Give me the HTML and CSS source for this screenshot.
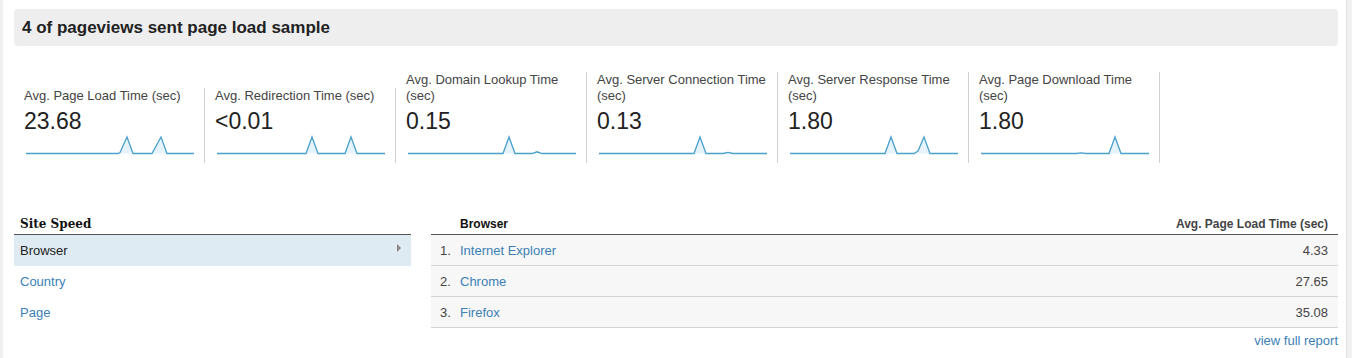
FILE: index.html
```html
<!DOCTYPE html>
<html lang="en">
<head>
  <meta charset="UTF-8" />
  <title>Site Speed Overview</title>
  <meta name="viewport" content="width=device-width, initial-scale=1.0" />
  <link rel="stylesheet" href="styles.css">
</head>

<body>
  <div class="page">

    <!-- Sample banner -->
    <div class="banner">4 of pageviews sent page load sample</div>

    <!-- Metric cards -->
    <div class="metrics">
      <div class="metric">
        <div class="metric-label">Avg. Page Load Time (sec)</div>
        <div class="metric-value">23.68</div>
        <svg class="spark" width="168" height="20" viewBox="0 0 168 20">
          <path class="spark-fill" d="M0 18.5 L92 18.5 L94 17.5 L101 2 L107 18.5 L126 18.5 L135 2 L141 18.5 L168 18.5 Z" />
          <path class="spark-line" d="M0 18.5 L92 18.5 L94 17.5 L101 2 L107 18.5 L126 18.5 L135 2 L141 18.5 L168 18.5" />
        </svg>
      </div>
      <div class="metric">
        <div class="metric-label">Avg. Redirection Time (sec)</div>
        <div class="metric-value">&lt;0.01</div>
        <svg class="spark" width="168" height="20" viewBox="0 0 168 20">
          <path class="spark-fill" d="M0 18.5 L89 18.5 L95 2 L101 18.5 L128 18.5 L134 2 L140 18.5 L168 18.5 Z" />
          <path class="spark-line" d="M0 18.5 L89 18.5 L95 2 L101 18.5 L128 18.5 L134 2 L140 18.5 L168 18.5" />
        </svg>
      </div>
      <div class="metric">
        <div class="metric-label">Avg. Domain Lookup Time (sec)</div>
        <div class="metric-value">0.15</div>
        <svg class="spark" width="168" height="20" viewBox="0 0 168 20">
          <path class="spark-fill" d="M0 18.5 L95 18.5 L101 2 L107 18.5 L124 18.5 L129 16.8 L134 18.5 L168 18.5 Z" />
          <path class="spark-line" d="M0 18.5 L95 18.5 L101 2 L107 18.5 L124 18.5 L129 16.8 L134 18.5 L168 18.5" />
        </svg>
      </div>
      <div class="metric">
        <div class="metric-label">Avg. Server Connection Time (sec)</div>
        <div class="metric-value">0.13</div>
        <svg class="spark" width="168" height="20" viewBox="0 0 168 20">
          <path class="spark-fill" d="M0 18.5 L95 18.5 L101 2 L107 18.5 L124 18.5 L129 17.3 L134 18.5 L168 18.5 Z" />
          <path class="spark-line" d="M0 18.5 L95 18.5 L101 2 L107 18.5 L124 18.5 L129 17.3 L134 18.5 L168 18.5" />
        </svg>
      </div>
      <div class="metric">
        <div class="metric-label">Avg. Server Response Time (sec)</div>
        <div class="metric-value">1.80</div>
        <svg class="spark" width="168" height="20" viewBox="0 0 168 20">
          <path class="spark-fill" d="M0 18.5 L95 18.5 L101 2 L107 18.5 L124 18.5 L128 16 L134 2 L140 18.5 L168 18.5 Z" />
          <path class="spark-line" d="M0 18.5 L95 18.5 L101 2 L107 18.5 L124 18.5 L128 16 L134 2 L140 18.5 L168 18.5" />
        </svg>
      </div>
      <div class="metric">
        <div class="metric-label">Avg. Page Download Time (sec)</div>
        <div class="metric-value">1.80</div>
        <svg class="spark" width="168" height="20" viewBox="0 0 168 20">
          <path class="spark-fill" d="M0 18.5 L95 18.5 L100 17.8 L105 18.5 L128 18.5 L134 2 L140 18.5 L168 18.5 Z" />
          <path class="spark-line" d="M0 18.5 L95 18.5 L100 17.8 L105 18.5 L128 18.5 L134 2 L140 18.5 L168 18.5" />
        </svg>
      </div>
    </div>

    <!-- Tables -->
    <div class="tables">
      <table class="dims">
        <thead>
          <tr><th>Site Speed</th></tr>
        </thead>
        <tbody>
          <tr class="selected"><td>Browser <span class="arrow"></span></td></tr>
          <tr><td><a href="#">Country</a></td></tr>
          <tr><td><a href="#">Page</a></td></tr>
        </tbody>
      </table>

      <div class="report">
        <table class="data">
          <thead>
            <tr>
              <th class="num"></th>
              <th>Browser</th>
              <th class="val">Avg. Page Load Time (sec)</th>
            </tr>
          </thead>
          <tbody>
            <tr><td class="num">1.</td><td><a href="#">Internet Explorer</a></td><td class="val">4.33</td></tr>
            <tr><td class="num">2.</td><td><a href="#">Chrome</a></td><td class="val">27.65</td></tr>
            <tr><td class="num">3.</td><td><a href="#">Firefox</a></td><td class="val">35.08</td></tr>
          </tbody>
        </table>
        <div class="full-report"><a href="#">view full report</a></div>
      </div>
    </div>
  </div>

  <!-- Scrollbar strip -->
  <div class="rail"></div>
</body>
</html>
```

FILE: styles.css
```css
body {
  font-family: "Liberation Sans", Arial, sans-serif;
  margin: 0;
  color: #333;
  background-color: #fff;
  display: flex;
  height: 358px;
  overflow: hidden;
}

a {
  color: #3b7fb6;
  text-decoration: none;
}

.page {
  flex: 1;
  border-left: 3px solid #f0f0f0;
  padding: 9px 8px 0 11px;
}

.rail {
  width: 5px;
  background-color: #f1f1f1;
  border-left: 1px solid #e2e2e2;
}

/* Banner */
.banner {
  background-color: #eeeeee;
  border-radius: 4px;
  height: 37px;
  line-height: 37px;
  padding-left: 8px;
  font-size: 17px;
  font-weight: bold;
  color: #222;
}

/* Metrics */
.metrics {
  display: flex;
  align-items: flex-end;
  margin-top: 26px;
  height: 91px;
}

.metric {
  width: 170px;
  padding: 0 10px 8px 10px;
  border-right: 1px solid #d0d0d0;
}

.metric-label {
  font-size: 13px;
  line-height: 16px;
  color: #444;
}

.metric-value {
  font-size: 23px;
  line-height: 28px;
  margin-top: 3px;
  color: #222;
}

.spark {
  display: block;
  margin: 0 0 0 2px;
}

.spark-line {
  fill: none;
  stroke: #4aa1cb;
  stroke-width: 1.3;
}

.spark-fill {
  fill: #e6f3fa;
}

/* Tables */
.tables {
  display: flex;
  align-items: flex-start;
  gap: 20px;
  margin-top: 51px;
}

table {
  border-collapse: collapse;
  font-size: 13px;
}

th {
  font-size: 12px;
  font-weight: bold;
  color: #111;
  text-align: left;
  line-height: 14px;
  padding: 3px 0 3px 0;
  vertical-align: top;
  border-bottom: 1px solid #555;
}

td {
  height: 30px;
  padding: 0;
}

.dims {
  width: 397px;
}

.dims th {
  font-family: "DejaVu Serif", serif;
  padding-left: 6px;
}

.dims td {
  padding: 0 6px;
  height: 31px;
}

.dims tr.selected td {
  background-color: #deebf3;
  color: #222;
}

.arrow {
  float: right;
  margin: 1px 4px 0 0;
  width: 0;
  height: 0;
  border-top: 4px solid transparent;
  border-bottom: 4px solid transparent;
  border-left: 4px solid #888;
}

.report {
  flex: 1;
}

.data {
  width: 100%;
}

.data td {
  background-color: #f7f7f7;
  border-bottom: 1px solid #d4d4d4;
}

.data .num {
  width: 20px;
  padding-left: 9px;
  color: #444;
}

.data .val {
  text-align: right;
  padding-right: 10px;
  color: #444;
}

.full-report {
  text-align: right;
  font-size: 13px;
  margin-top: 5px;
}
```
